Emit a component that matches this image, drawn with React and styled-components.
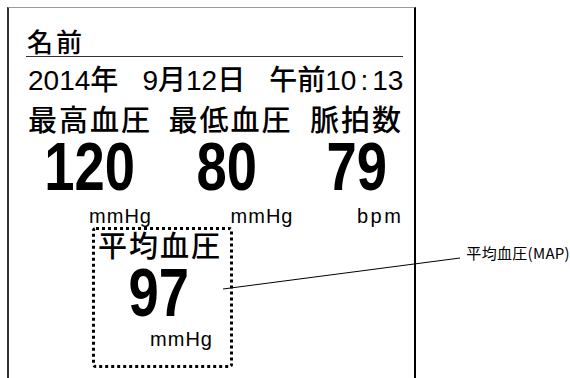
import React from "react";
import styled, { createGlobalStyle } from "styled-components";

const GlobalStyle = createGlobalStyle`
  html, body {
    margin: 0;
    padding: 0;
    background: #ffffff;
    overflow: hidden;
  }
  body {
    font-family: "Noto Sans CJK JP", "Liberation Sans", sans-serif;
    color: #000;
  }
`;

const Page = styled.div`
  position: relative;
  width: 570px;
  height: 378px;
  display: flex;
  align-items: flex-start;
  overflow: hidden;
`;

const Panel = styled.div`
  box-sizing: border-box;
  margin: 7px 0 0 7px;
  width: 410px;
  height: 390px;
  border-top: 1px solid #9a9a9a;
  border-left: 2px solid #333;
  border-right: 2px solid #000;
  padding: 20px 11px 0 19px;
  display: flex;
  flex-direction: column;
`;

const NameRow = styled.div`
  font-family: "Noto Sans CJK JP", sans-serif;
  font-weight: 500;
  font-size: 26px;
  line-height: 26px;
  letter-spacing: 3px;
  padding: 0 0 2px 1px;
  margin-left: -2px;
  border-bottom: 1px solid #333;
`;

const DateRow = styled.div`
  display: flex;
  justify-content: space-between;
  margin-top: 10px;
  font-family: "Liberation Sans", "Noto Sans CJK JP", sans-serif;
  font-weight: 500;
  font-size: 28px;
  line-height: 28px;
  height: 28px;
`;

const Colon = styled.span`
  margin: 0 4px;
`;

const Readings = styled.div`
  display: grid;
  grid-template-columns: 124px 125px 1fr;
  column-gap: 16.5px;
  margin-top: 8px;
`;

const Label = styled.div`
  font-family: "Noto Sans CJK JP", sans-serif;
  font-weight: 500;
  font-size: 29px;
  line-height: 30px;
  letter-spacing: 2px;
  white-space: nowrap;
`;

const Value = styled.div`
  text-align: center;
  font-family: "Liberation Sans", sans-serif;
  font-weight: 700;
  font-size: 68px;
  line-height: 64px;
  margin-top: 1px;
  span {
    display: inline-block;
    transform: scaleX(0.8);
    transform-origin: center;
    margin-left: ${(p) => p.$shift || 0}px;
  }
`;

const Unit = styled.div`
  text-align: right;
  font-family: "Liberation Sans", sans-serif;
  font-size: 20px;
  line-height: 20px;
  letter-spacing: ${(p) => p.$spacing || 1}px;
  margin-top: 8px;
`;

const MapBox = styled.div`
  box-sizing: border-box;
  margin: 1px 0 0 64px;
  width: 141px;
  height: 141px;
  border: 3px dotted #000;
  border-radius: 4px;
  display: flex;
  flex-direction: column;
  padding: 0 17px 0 3px;
`;

const MapTitle = styled(Label)`
  line-height: 28px;
`;

const MapValue = styled(Value)`
  margin-top: 2px;
`;

const MapUnit = styled(Unit)`
  margin-top: 5px;
`;

const Side = styled.div`
  padding: 244px 0 0 50px;
  font-family: "Noto Sans CJK JP", sans-serif;
  font-size: 15px;
  line-height: 18px;
  white-space: nowrap;
  letter-spacing: 0.3px;
`;

const Leader = styled.svg`
  position: absolute;
  left: 0;
  top: 0;
  width: 570px;
  height: 378px;
  pointer-events: none;
`;

export default function App() {
  return (
    <>
      <GlobalStyle />
      <Page>
        <Panel>
          <NameRow>名前</NameRow>
          <DateRow>
            <span>2014年</span>
            <span>9月12日</span>
            <span>
              午前10<Colon>:</Colon>13
            </span>
          </DateRow>
          <Readings>
            <Label>最高血圧</Label>
            <Label>最低血圧</Label>
            <Label>脈拍数</Label>
            <Value>
              <span>120</span>
            </Value>
            <Value $shift={-8}>
              <span>80</span>
            </Value>
            <Value>
              <span>79</span>
            </Value>
            <Unit>mmHg</Unit>
            <Unit>mmHg</Unit>
            <Unit $spacing={2.5}>bpm</Unit>
          </Readings>
          <MapBox>
            <MapTitle>平均血圧</MapTitle>
            <MapValue $shift={6}>
              <span>97</span>
            </MapValue>
            <MapUnit>mmHg</MapUnit>
          </MapBox>
        </Panel>
        <Side>平均血圧(MAP)</Side>
        <Leader viewBox="0 0 570 378">
          <line x1="223" y1="289" x2="460" y2="258" stroke="#000" strokeWidth="1" />
        </Leader>
      </Page>
    </>
  );
}
